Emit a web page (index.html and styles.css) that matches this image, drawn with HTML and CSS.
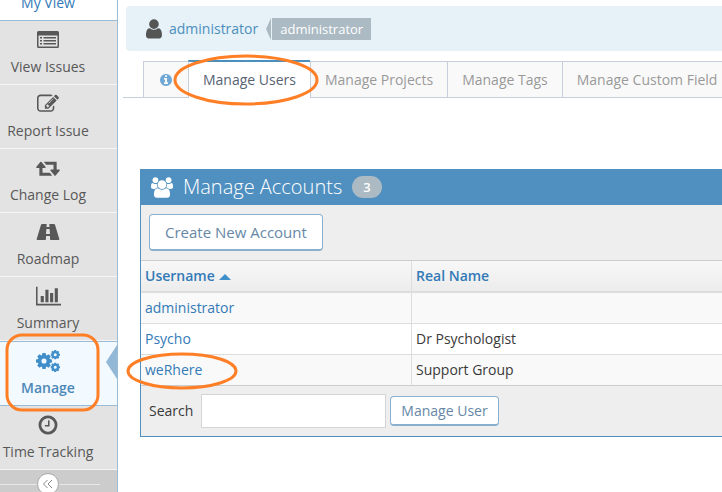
FILE: index.html
```
<!DOCTYPE html>
<html lang="en">
<head>
<meta charset="utf-8">
<title>Manage Users</title>
<link rel="stylesheet" href="styles.css">
</head>
<body>
<svg class="defs" aria-hidden="true">
  <symbol id="gear" viewBox="-10 -10 20 20">
    <circle r="5.4" fill="none" stroke="currentColor" stroke-width="4.4"/>
    <g fill="currentColor">
      <path id="teeth" d="M-2-10h4l.8 4h-5.600zM-2 10h4l.8-4h-5.600z"/>
      <use href="#teeth" transform="rotate(45)"/>
      <use href="#teeth" transform="rotate(90)"/>
      <use href="#teeth" transform="rotate(135)"/>
    </g>
  </symbol>
</svg>
<div class="app">
  <nav class="sidebar">
    <ul class="menu">
      <li class="item current"><a href="#"><span class="icon"></span>My View</a></li>
      <li class="item"><a href="#"><span class="icon"><svg viewBox="0 0 22 18" width="22" height="18"><path fill="currentColor" fill-rule="evenodd" d="M1.500 0h19Q22 0 22 1.500v14q0 1.500-1.500 1.500h-19Q0 17 0 15.500v-14Q0 0 1.500 0zM1.500 4.500v10.500q0 .5.5.5h18q.5 0 .5-.5V4.500zM3 6h2v1.500H3zM6.500 6H19v1.500H6.500zM3 9h2v1.500H3zM6.500 9H19v1.500H6.500zM3 12h2v1.500H3zM6.500 12H19v1.500H6.500z"/></svg></span>View Issues</a></li>
      <li class="item"><a href="#"><span class="icon"><svg viewBox="0 0 1792 1792" width="22" height="22"><path fill="currentColor" d="M888 1184l116-116-152-152-116 116v56h96v96h56zm440-720q-16-16-33 1l-350 350q-17 17-1 33t33-1l350-350q17-17 1-33zm80 594v190q0 119-84.500 203.500t-203.500 84.500h-832q-119 0-203.500-84.500t-84.500-203.500v-832q0-119 84.500-203.500t203.500-84.500h832q63 0 117 25 15 7 18 23 3 17-9 29l-49 49q-14 14-32 8-23-6-45-6h-832q-66 0-113 47t-47 113v832q0 66 47 113t113 47h832q66 0 113-47t47-113v-126q0-13 9-22l64-64q15-15 35-7t20 29zm-96-738l288 288-672 672h-288v-288zm444 132l-92 92-288-288 92-92q28-28 68-28t68 28l152 152q28 28 28 68t-28 68z"/></svg></span>Report Issue</a></li>
      <li class="item"><a href="#"><span class="icon"><svg viewBox="0 0 1920 1792" width="24" height="22"><path fill="currentColor" d="M1280 1504q0 13-9.500 22.500t-22.500 9.500h-960q-8 0-13.500-2t-9-7-5.500-8-3-11.500-1-11.500v-600h-192q-26 0-45-19t-19-45q0-24 15-41l320-384q19-22 49-22t49 22l320 384q15 17 15 41 0 26-19 45t-45 19h-192v384h576q16 0 25 11l160 192q7 10 7 21zm640-416q0 24-15 41l-320 384q-20 23-49 23t-49-23l-320-384q-15-17-15-41 0-26 19-45t45-19h192v-384h-576q-16 0-25-12l-160-192q-7-9-7-20 0-13 9.500-22.500t22.500-9.500h960q8 0 13.500 2t9 7 5.500 8 3 11.500 1 11.500v600h192q26 0 45 19t19 45z"/></svg></span>Change Log</a></li>
      <li class="item"><a href="#"><span class="icon"><svg viewBox="0 0 24 18" width="24" height="18"><path fill="currentColor" fill-rule="evenodd" d="M6 1h4.700l-.2 3h3l-.2-3H18q.7 0 1 .7L23.300 16q.3 1-.7 1h-8.400l-.3-4h-3.800l-.3 4H1.400q-1 0-.7-1L5 1.700Q5.300 1 6 1zM10.400 6l-.4 5h4l-.4-5z"/></svg></span>Roadmap</a></li>
      <li class="item"><a href="#"><span class="icon"><svg viewBox="0 0 2048 1792" width="25" height="22"><path fill="currentColor" d="M640 896v512h-256v-512h256zm384-512v1024h-256v-1024h256zm1024 1152v128h-2048v-1536h128v1408h1920zm-640-896v768h-256v-768h256zm384-384v1152h-256v-1152h256z"/></svg></span>Summary</a></li>
      <li class="item active"><a href="#"><span class="icon"><svg viewBox="0 0 24 22" width="24" height="22"><use href="#gear" x="0" y="3" width="16" height="16"/><use href="#gear" x="14.500" y="0" width="9.500" height="9.500"/><use href="#gear" x="14.500" y="12.500" width="9.500" height="9.500"/></svg></span>Manage</a></li>
      <li class="item"><a href="#"><span class="icon"><svg viewBox="0 0 1792 1792" width="22" height="22"><path fill="currentColor" d="M1024 544v448q0 14-9 23t-23 9h-320q-14 0-23-9t-9-23v-64q0-14 9-23t23-9h224v-352q0-14 9-23t23-9h64q14 0 23 9t9 23zm416 352q0-148-73-273t-198-198-273-73-273 73-198 198-73 273 73 273 198 198 273 73 273-73 198-198 73-273zm224 0q0 209-103 385.500t-279.500 279.500-385.500 103-385.500-103-279.500-279.500-103-385.500 103-385.500 279.500-279.500 385.500-103 385.500 103 279.500 279.500 103 385.500z"/></svg></span>Time Tracking</a></li>
    </ul>
    <div class="collapse">
      <button class="toggle" type="button" aria-label="Collapse menu"><svg viewBox="0 0 10 10" width="10" height="10"><path d="M4.500 1l-4 4 4 4M9 1L5 5l4 4" fill="none" stroke="currentColor"/></svg></button>
    </div>
  </nav>
  <main class="content">
    <div class="breadcrumbs">
      <svg class="user" viewBox="200 100 1400 1600" width="18" height="20"><path fill="currentColor" d="M1536 1399q0 109-62.500 187t-150.500 78h-854q-88 0-150.500-78t-62.500-187q0-85 8.500-160.500t31.500-152 58.500-131 94-89 134.500-34.500q131 128 313 128t313-128q76 0 134.500 34.500t94 89 58.500 131 31.500 152 8.500 160.500zm-256-887q0 159-112.500 271.500t-271.500 112.500-271.500-112.500-112.500-271.500 112.500-271.500 271.500-112.500 271.500 112.500 112.500 271.500z"/></svg>
      <a href="#">administrator</a>
      <span class="label">administrator</span>
    </div>
    <ul class="tabs">
      <li><a href="#" aria-label="Information"><svg class="info" viewBox="128 128 1536 1536" width="12" height="12"><path fill="currentColor" d="M1152 1376v-160q0-14-9-23t-23-9h-96v-512q0-14-9-23t-23-9h-320q-14 0-23 9t-9 23v160q0 14 9 23t23 9h96v320h-96q-14 0-23 9t-9 23v160q0 14 9 23t23 9h448q14 0 23-9t9-23zm-128-896v-160q0-14-9-23t-23-9h-192q-14 0-23 9t-9 23v160q0 14 9 23t23 9h192q14 0 23-9t9-23zm640 416q0 209-103 385.500t-279.500 279.500-385.500 103-385.500-103-279.500-279.500-103-385.500 103-385.500 279.500-279.500 385.500-103 385.500 103 279.500 279.500 103 385.500z"/></svg></a></li>
      <li class="selected"><a href="#">Manage Users</a></li>
      <li><a href="#">Manage Projects</a></li>
      <li><a href="#">Manage Tags</a></li>
      <li><a href="#">Manage Custom Field</a></li>
    </ul>
    <section class="panel">
      <h4 class="title"><svg viewBox="0 0 1920 1792" width="22" height="21"><path fill="currentColor" d="M593 896q-162 5-265 128h-134q-82 0-138-40.500t-56-118.500q0-353 124-353 6 0 43.500 21t97.500 42.500 119 21.500q67 0 133-23-5 37-5 66 0 139 81 256zm1071 637q0 120-73 189.500t-194 69.500h-874q-121 0-194-69.500t-73-189.500q0-53 3.500-103.500t14-109 26.500-108.500 43-97.500 62-81 85.500-53.500 111.500-20q10 0 43 21.500t73 48 107 48 135 21.500 135-21.500 107-48 73-48 43-21.500q61 0 111.500 20t85.500 53.500 62 81 43 97.500 26.500 108.500 14 109 3.500 103.500zm-1024-1277q0 106-75 181t-181 75-181-75-75-181 75-181 181-75 181 75 75 181zm704 384q0 159-112.500 271.500t-271.500 112.500-271.500-112.500-112.500-271.500 112.500-271.500 271.500-112.500 271.500 112.500 112.500 271.500zm576 225q0 78-56 118.500t-138 40.500h-134q-103-123-265-128 81-117 81-256 0-29-5-66 66 23 133 23 59 0 119-21.500t97.500-42.500 43.500-21q124 0 124 353zm-128-609q0 106-75 181t-181 75-181-75-75-181 75-181 181-75 181 75 75 181z"/></svg><span>Manage Accounts</span><span class="badge">3</span></h4>
      <div class="toolbar"><button class="btn large" type="button">Create New Account</button></div>
      <table class="accounts">
        <thead><tr><th class="name"><a href="#">Username<span class="caret"></span></a></th><th><a href="#">Real Name</a></th></tr></thead>
        <tbody>
          <tr><td><a href="#">administrator</a></td><td></td></tr>
          <tr><td><a href="#">Psycho</a></td><td>Dr Psychologist</td></tr>
          <tr><td><a href="#">weRhere</a></td><td>Support Group</td></tr>
        </tbody>
      </table>
      <form class="search">
        <label for="search">Search</label>
        <input id="search" type="text">
        <button class="btn" type="button">Manage User</button>
      </form>
    </section>
  </main>
</div>
<svg class="marks" aria-hidden="true" fill="none" stroke="#ff7f27" stroke-width="3">
  <ellipse cx="246" cy="80" rx="71" ry="24"/>
  <rect x="7" y="335" width="91" height="75" rx="15"/>
  <ellipse cx="182" cy="371" rx="54" ry="17"/>
</svg>
</body>
</html>
```
FILE: styles.css
```
* { box-sizing: border-box; }
body {
  margin: 0;
  overflow: hidden;
  background: #fff;
  color: #393939;
  font: 14px/20px "Open Sans", sans-serif;
}
a { color: #337ab7; text-decoration: none; }
svg { display: block; flex: none; }
ul { margin: 0; padding: 0; list-style: none; }
.defs { position: absolute; width: 0; height: 0; }
.app { display: flex; height: 100vh; }

.sidebar {
  flex: none;
  width: 118px;
  overflow: hidden;
  background: #ccc;
  border-right: 1px solid #9abcd6;
}
.menu { margin-top: -43px; }
.item { background: #e3e3e3; border-bottom: 1px solid #f5f5f5; }
.item a {
  display: flex;
  flex-direction: column;
  align-items: center;
  height: 63px;
  padding: 8px 21px 0 0;
  gap: 6px;
  color: #585858;
  white-space: nowrap;
}
.icon { display: flex; align-items: center; justify-content: center; height: 22px; }
.item.current { background: #fff; border-color: #9abcd6; }
.item.current a { color: #337ab7; }
.item.active {
  position: relative;
  background: #f2f9ff;
  border-top: 1px solid #9abcd6;
  border-color: #9abcd6;
}
.item.active a { color: #4b88b7; font-weight: 600; }
.item.active .icon { color: #418fca; }
.item.active::after {
  content: "";
  position: absolute;
  right: 0;
  top: 3px;
  border: solid transparent;
  border-width: 17px 11px 17px 0;
  border-right-color: #93b8d6;
}
.collapse {
  display: flex;
  justify-content: center;
  height: 30px;
  padding: 3px 4px 3px 0;
  margin-right: 17px;
  background: linear-gradient(#e8e8e8, #e8e8e8) 0 14px / 100% 1px no-repeat;
}
.toggle {
  display: flex;
  align-items: center;
  justify-content: center;
  width: 22px;
  height: 22px;
  padding: 0;
  border: 1px solid #aaa;
  border-radius: 50%;
  background: #fff;
  color: #888;
}

.content { flex: 1; min-width: 0; overflow: hidden; padding: 6px 0 0 5px; }
.breadcrumbs {
  display: flex;
  align-items: center;
  height: 45px;
  margin-left: 3px;
  padding-left: 18px;
  border-radius: 4px 0 0 4px;
  background: #e6f1f8;
}
.user { margin: 0 6px 0 1px; color: #555; }
.breadcrumbs a { color: #4c8fbd; }
.label {
  position: relative;
  margin-left: 14px;
  padding: 1px 8px;
  background: #abbac3;
  color: #fff;
  font-size: 13px;
}
.label::before {
  content: "";
  position: absolute;
  right: 100%;
  top: 0;
  margin-right: 1px;
  border: solid transparent;
  border-width: 11px 5px 11px 0;
  border-right-color: #abbac3;
}
.tabs {
  display: flex;
  height: 38px;
  margin-top: 9px;
  padding: 1px 0 0 20px;
  border-bottom: 1px solid #c5d0dc;
}
.tabs li {
  flex: none;
  border: solid #c5d0dc;
  border-width: 1px 0 0 1px;
  background: #f9f9f9;
}
.tabs li:last-child { flex: 1 0 auto; }
.tabs a { display: block; padding: 8px 14px; color: #999; }
.tabs .info { margin: 4px 2px; color: #6fa8d6; }
.tabs .selected { height: 38px; margin-top: -1px; border-top: 2px solid #4c8fbd; background: #fff; }
.tabs .selected a { color: #576373; }

.panel { margin: 71px 0 0 17px; border: solid #5090c1; border-width: 0 0 1px 1px; background: #eee; }
.title {
  display: flex;
  align-items: center;
  height: 36px;
  margin: 0;
  padding-left: 10px;
  gap: 10px;
  background: #5090c1;
  color: #fff;
  font-size: 20px;
  font-weight: 300;
}
.badge {
  height: 22px;
  padding: 1px 11px;
  border-radius: 11px;
  background: #abbac3;
  font-size: 13px;
  font-weight: 600;
}
.toolbar { padding: 9px 8px; }
.btn {
  height: 30px;
  padding: 0 10px;
  border: 1px solid #8ab0d0;
  border-bottom-width: 2px;
  border-radius: 4px;
  background: #fff;
  color: #6688a6;
  font: inherit;
}
.btn.large { display: block; height: 37px; padding: 0 15px; font-size: 15px; }
.accounts { width: 100%; border-collapse: separate; border-spacing: 0; border-top: 1px solid #ccc; table-layout: fixed; }
.accounts th, .accounts td { padding: 5px 4px; text-align: left; border-bottom: 1px solid #ddd; height: 31px; }
.accounts th { border-bottom-width: 2px; height: 32px; background: linear-gradient(#f8f8f8, #ececec); font-weight: 600; }
.accounts .name { width: 270px; }
.accounts th + th, .accounts td + td { border-left: 1px solid #ddd; }
.accounts tbody tr { background: #fff; }
.accounts tbody tr:nth-child(odd) { background: #f9f9f9; }
.accounts tbody tr:last-child td { border-bottom-color: #ccc; }
.caret { display: inline-block; margin-left: 4px; border: solid transparent; border-width: 0 6px 6px; border-bottom-color: #418fca; vertical-align: 1px; }
.search { display: flex; align-items: center; padding: 8px; }
.search label { margin-right: 8px; }
.search input { width: 185px; height: 34px; margin-right: 4px; padding: 4px; border: 1px solid #d5d5d5; background: #fff; font: inherit; }
.marks { position: absolute; left: 0; top: 0; width: 100%; height: 100%; pointer-events: none; }
```
